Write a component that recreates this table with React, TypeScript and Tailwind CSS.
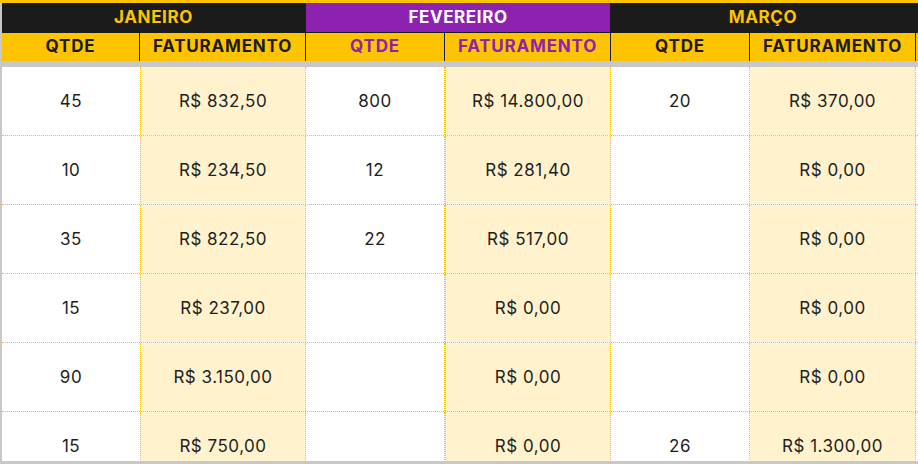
import React from 'react'

const font = { fontFamily: 'Inter, "Liberation Sans", sans-serif' }

const months = [
  { name: 'JANEIRO', bg: 'bg-[#1b1b1b]', title: 'text-[#ffc400]', sub: 'text-[#1b1b1b]' },
  { name: 'FEVEREIRO', bg: 'bg-[#8e22b0]', title: 'text-white', sub: 'text-[#8e22b0]' },
  { name: 'MARÇO', bg: 'bg-[#1b1b1b]', title: 'text-[#ffc400]', sub: 'text-[#1b1b1b]' },
]

const rows: [string, string, string, string, string, string][] = [
  ['45', 'R$ 832,50', '800', 'R$ 14.800,00', '20', 'R$ 370,00'],
  ['10', 'R$ 234,50', '12', 'R$ 281,40', '', 'R$ 0,00'],
  ['35', 'R$ 822,50', '22', 'R$ 517,00', '', 'R$ 0,00'],
  ['15', 'R$ 237,00', '', 'R$ 0,00', '', 'R$ 0,00'],
  ['90', 'R$ 3.150,00', '', 'R$ 0,00', '', 'R$ 0,00'],
  ['15', 'R$ 750,00', '', 'R$ 0,00', '26', 'R$ 1.300,00'],
]

const cols = 'grid grid-cols-[138px_166px_139px_166px_139px_166px]'

export default function App() {
  return (
    <div className="w-[918px] h-[464px] bg-[#c8c8c8] flex flex-col overflow-hidden" style={font}>
      <div className="h-[3px] bg-[#ffc400] shrink-0" />
      <div className="pl-[2px] shrink-0">
        {/* month titles */}
        <div className="flex h-[30px] bg-[#1b1b1b] border-b border-[#1b1b1b]">
          {months.map((m) => (
            <div
              key={m.name}
              className={`flex items-center justify-center font-bold text-[17px] tracking-[0.6px] pt-[1px] border-r border-[#1b1b1b] ${m.bg} ${m.title} ${m.name === 'JANEIRO' ? 'w-[304px]' : 'w-[305px]'}`}
            >
              {m.name}
            </div>
          ))}
        </div>
        {/* sub headers */}
        <div className={`${cols} h-[28px] bg-[#ffc400]`}>
          {months.map((m) => (
            <React.Fragment key={m.name}>
              <div className={`flex items-center justify-center font-bold text-[17px] tracking-[0.8px] border-r border-[#1b1b1b] ${m.sub}`}>QTDE</div>
              <div className={`flex items-center justify-center font-bold text-[17px] tracking-[0.8px] border-r border-[#1b1b1b] ${m.sub}`}>FATURAMENTO</div>
            </React.Fragment>
          ))}
        </div>
      </div>
      <div className="h-[6px] shrink-0" />
      <div className="flex-1 pl-[2px] overflow-hidden">
        {rows.map((r, i) => (
          <div key={i} className={`${cols} h-[69px] bg-white border-b border-dotted border-[#ffc400]`}>
            {r.map((c, j) => (
              <div
                key={j}
                className={`flex items-center justify-center pt-[2px] text-[17px] tracking-[0.5px] text-[#1e1e1e] border-dotted border-[#ffc400] ${j % 2 === 1 ? 'bg-[#fff2cc] border-r' : 'bg-white'} ${j === 1 || j === 3 ? 'border-l' : ''} ${j === 2 || j === 4 ? 'border-r' : ''}`}
              >
                {c}
              </div>
            ))}
          </div>
        ))}
      </div>
      <div className="h-[3px] shrink-0" />
    </div>
  )
}
